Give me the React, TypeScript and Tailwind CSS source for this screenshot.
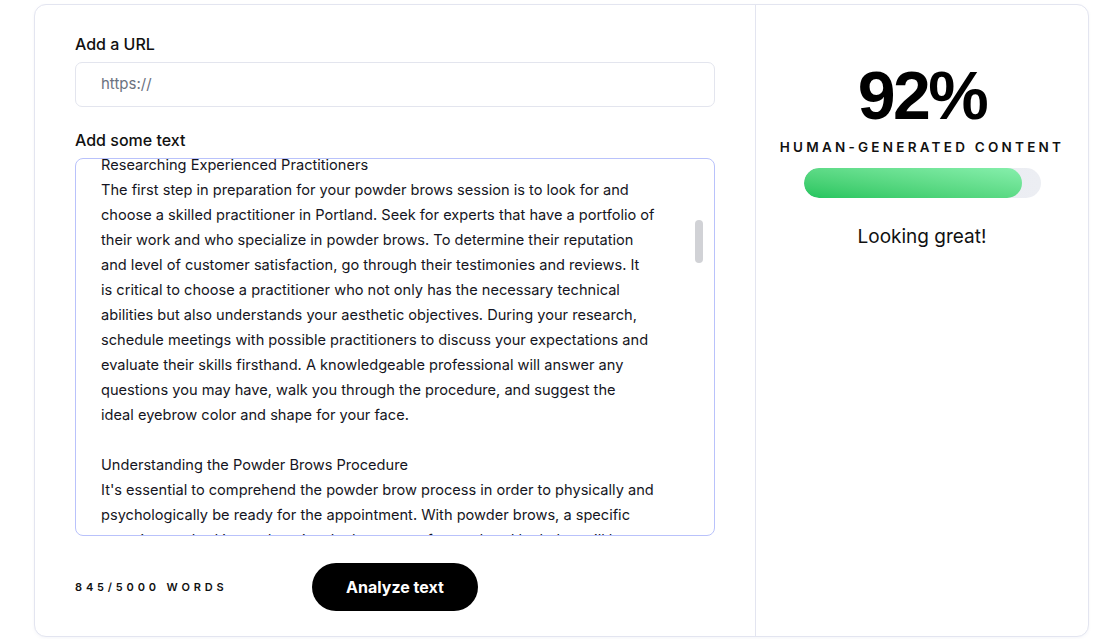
import React from "react";

const lines: string[] = [
  "Researching Experienced Practitioners",
  "The first step in preparation for your powder brows session is to look for and",
  "choose a skilled practitioner in Portland. Seek for experts that have a portfolio of",
  "their work and who specialize in powder brows. To determine their reputation",
  "and level of customer satisfaction, go through their testimonies and reviews. It",
  "is critical to choose a practitioner who not only has the necessary technical",
  "abilities but also understands your aesthetic objectives. During your research,",
  "schedule meetings with possible practitioners to discuss your expectations and",
  "evaluate their skills firsthand. A knowledgeable professional will answer any",
  "questions you may have, walk you through the procedure, and suggest the",
  "ideal eyebrow color and shape for your face.",
  "",
  "Understanding the Powder Brows Procedure",
  "It's essential to comprehend the powder brow process in order to physically and",
  "psychologically be ready for the appointment. With powder brows, a specific",
  "tattooing method is used to give the brows a soft, powdered look that will last",
  "for a long time. The artist will apply pigment with a machine in tiny dots.",
];

export default function App() {
  const font = { fontFamily: "Inter, 'Noto Sans', sans-serif" };
  return (
    <div className="min-h-screen w-full bg-white" style={font}>
      <div className="pl-[34px] pt-[4px]">
        <div className="flex h-[633px] w-[1055px] rounded-[12px] border border-[#e3e5f0] bg-white shadow-[0_1px_3px_rgba(120,130,180,0.08)]">
          {/* Left */}
          <div className="flex w-[720px] flex-col px-[40px] pt-[27px]">
            <label className="text-[16px] font-medium leading-[24px] text-[#111]">Add a URL</label>
            <div className="mt-[6px] flex h-[45px] items-center rounded-[7px] border border-[#e3e5ee] pl-[25px]">
              <span className="text-[15px] text-[#6b7280]">https://</span>
            </div>
            <label className="mt-[21px] text-[16px] font-medium leading-[24px] text-[#111]">Add some text</label>
            <div className="relative mt-[6px] h-[378px] overflow-hidden rounded-[8px] border border-[#b9c2fb]">
              <div className="-mt-[6px] pl-[25px]">
                {lines.map((l, i) => (
                  <div key={i} className="h-[25px] whitespace-nowrap text-[14.6px] leading-[25px] text-[#151522]">
                    {l}
                  </div>
                ))}
              </div>
              <div className="absolute left-[619px] top-[61px] h-[43px] w-[8px] rounded-full bg-[#d1d2d6]" />
            </div>
            <div className="mt-[27px] flex items-center">
              <div className="w-[237px] text-[11px] font-semibold tracking-[0.35em] text-[#111]">845/5000 WORDS</div>
              <button className="h-[48px] w-[166px] rounded-full bg-black text-[16px] font-bold text-white">
                Analyze text
              </button>
            </div>
          </div>
          {/* Right */}
          <div className="flex flex-1 flex-col items-center border-l border-[#e3e5f0] pt-[56px]">
            <div
              className="text-[68px] font-bold leading-none tracking-[-2.5px] text-black"
              style={{ fontFamily: "'Liberation Sans', Arial, sans-serif" }}
            >
              92%
            </div>
            <div className="mt-[8px] text-[13.5px] font-semibold leading-[20px] tracking-[0.24em] text-[#111]">
              HUMAN-GENERATED CONTENT
            </div>
            <div className="mt-[11px] h-[30px] w-[237px] overflow-hidden rounded-full bg-gradient-to-r from-[#e6e8ef] to-[#eceef3]">
              <div
                className="h-full rounded-full bg-gradient-to-tr from-[#22c55e] to-[#86efac]"
                style={{ width: "92%" }}
              />
            </div>
            <div className="mt-[25px] text-[19px] leading-[28px] text-[#111]">Looking great!</div>
          </div>
        </div>
      </div>
    </div>
  );
}
